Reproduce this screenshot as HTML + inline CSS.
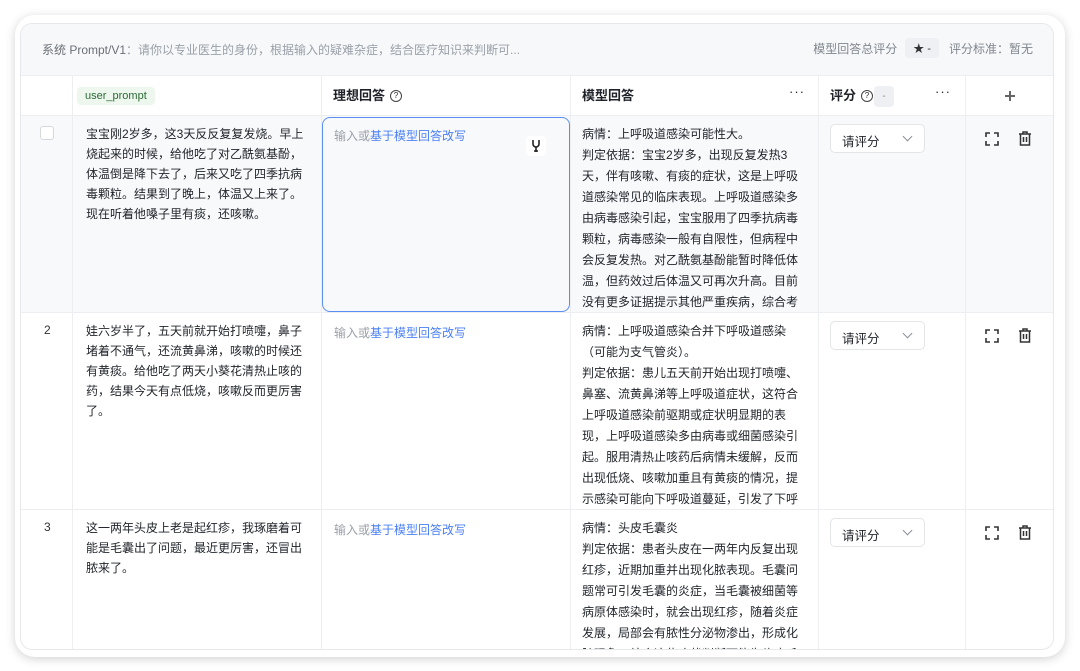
<!DOCTYPE html>
<html><head><meta charset="utf-8"><style>
*{box-sizing:border-box;margin:0;padding:0}
body{width:1080px;height:671px;background:#fff;font-family:"Liberation Sans","Noto Sans CJK SC",sans-serif;position:relative;overflow:hidden;color:#1f2329}
.outer{position:absolute;left:15px;top:15px;width:1050px;height:642px;border-radius:20px;background:#fff;box-shadow:0 2px 10px rgba(0,0,0,.18)}
.panel{position:absolute;left:20px;top:23px;width:1034px;height:627px;border:1px solid #e6e8ec;border-radius:12px;overflow:hidden;background:#fff}
.top{position:absolute;left:0;top:0;width:100%;height:52px;background:#f7f8fa;border-bottom:1px solid #eceef1;font-size:12px;color:#6b7280}
.top .l{position:absolute;left:21px;top:17px}
.top .l b{font-weight:normal;color:#6b7075}
.top .l span{color:#9aa0a8}
.top .r{position:absolute;right:20px;top:14px;display:flex;align-items:center;color:#80868f}
.chip{background:#eef0f3;border-radius:4px;padding:2px 8px;margin:0 10px 0 8px;color:#333;font-size:11px}
.col{position:absolute;top:52px;bottom:0;border-left:1px solid #eceef1}
.hdr{position:absolute;top:52px;left:0;width:100%;height:40px;border-bottom:1px solid #eceef1;background:#fff}
.h{position:absolute;top:64px;font-size:13px;line-height:16px;font-weight:bold;color:#1f2329}
.q{font-weight:normal;display:inline-block;width:12px;height:12px;border:1px solid #444;border-radius:50%;font-size:8px;line-height:10px;text-align:center;vertical-align:top;margin-top:2px;margin-left:5px}
.row{position:absolute;left:0;width:100%;border-bottom:1px solid #eceef1}
.t{position:absolute;font-size:12px;line-height:20px;color:#1f2329}
.m{line-height:21px}
.ph{position:absolute;font-size:12px;color:#9aa0a8}
.ph span{color:#4a7ff7}
.sel{position:absolute;width:95px;height:29px;border:1px solid #e3e5e9;border-radius:5px;background:#fff;font-size:12.5px;padding:6px 0 0 11px}
.sel i{position:absolute;right:13px;top:8px;width:7px;height:7px;border-right:1.2px solid #8a9099;border-bottom:1.2px solid #8a9099;transform:rotate(45deg)}
.clip{overflow:hidden}
.num{position:absolute;left:23px;font-size:12px;color:#333}
svg{position:absolute}
</style></head><body>
<div class="outer"></div>
<div class="panel">
 <div class="top"><div class="l"><b>系统 Prompt/V1</b><span>：请你以专业医生的身份，根据输入的疑难杂症，结合医疗知识来判断可...</span></div>
 <div class="r">模型回答总评分<span class="chip">★ -</span>评分标准：暂无</div></div>
 <div class="hdr"></div>
 <div class="row" style="top:92px;height:197px;background:#f8f9fb"></div>
 <div class="row" style="top:289px;height:197px"></div>
 <div class="col" style="left:51px"></div>
 <div class="col" style="left:300px"></div>
 <div class="col" style="left:549px"></div>
 <div class="col" style="left:797px"></div>
 <div class="col" style="left:944px"></div>
 <div style="position:absolute;left:56px;top:63px;background:#edf7ee;color:#2c6a35;font-size:11px;padding:3px 8px;border-radius:4px">user_prompt</div>
 <div class="h" style="left:312px">理想回答<span class="q">?</span></div>
 <div class="h" style="left:561px">模型回答</div>
 <div style="position:absolute;left:768px;top:60px;font-size:13px;letter-spacing:1px">···</div>
 <div class="h" style="left:809px">评分<span class="q">?</span></div>
 <div style="position:absolute;left:853px;top:62px;width:20px;height:21px;background:#eef0f3;border-radius:4px;font-size:10px;color:#888;text-align:center;line-height:21px">-</div>
 <div style="position:absolute;left:914px;top:60px;font-size:13px;letter-spacing:1px">···</div>
 <svg style="left:983px;top:66px" width="12" height="12"><path d="M6 1v10M1 6h10" stroke="#666" stroke-width="2"/></svg>

 <!-- row 1 -->
 <div style="position:absolute;left:19px;top:102px;width:14px;height:14px;border:1px solid #d5d8dd;border-radius:3px;background:#fff"></div>
 <div class="t" style="left:65px;top:100px;width:224px">宝宝刚2岁多，这3天反反复复发烧。早上烧起来的时候，给他吃了对乙酰氨基酚，体温倒是降下去了，后来又吃了四季抗病毒颗粒。结果到了晚上，体温又上来了。现在听着他嗓子里有痰，还咳嗽。</div>
 <div style="position:absolute;left:301px;top:93px;width:248px;height:195px;border:1px solid #5b8ef5;border-radius:8px;background:#f8f9fb"></div>
 <div class="ph" style="left:313px;top:103px">输入或<span>基于模型回答改写</span></div>
 <div style="position:absolute;left:505px;top:112px;width:20px;height:20px;background:#fff;border-radius:4px"></div>
 <svg style="left:509px;top:115px" width="12" height="14"><path d="M3 1v4a3 3 0 0 0 6 0V1M6 8v5M4 12h4" stroke="#222" stroke-width="1.6" fill="none"/></svg>
 <div class="t m clip" style="left:561px;top:100px;width:226px;height:188px">病情：上呼吸道感染可能性大。<br>判定依据：宝宝2岁多，出现反复发热3天，伴有咳嗽、有痰的症状，这是上呼吸道感染常见的临床表现。上呼吸道感染多由病毒感染引起，宝宝服用了四季抗病毒颗粒，病毒感染一般有自限性，但病程中会反复发热。对乙酰氨基酚能暂时降低体温，但药效过后体温又可再次升高。目前没有更多证据提示其他严重疾病，综合考虑上呼吸道感染可能性大。</div>
 <div class="sel" style="left:809px;top:100px">请评分<i></i></div>
 <svg style="left:964px;top:108px" width="14" height="14"><path d="M1 5V1h4M9 1h4v4M13 9v4H9M5 13H1V9" stroke="#333" stroke-width="1.6" fill="none"/></svg>
 <svg style="left:997px;top:107px" width="14" height="15"><path d="M1 3h12M5 3V1h4v2M2.5 3v11h9V3M5.5 6v5M8.5 6v5" stroke="#333" stroke-width="1.5" fill="none"/></svg>

 <!-- row 2 -->
 <div class="num" style="top:299px">2</div>
 <div class="t" style="left:65px;top:297px;width:224px">娃六岁半了，五天前就开始打喷嚏，鼻子堵着不通气，还流黄鼻涕，咳嗽的时候还有黄痰。给他吃了两天小葵花清热止咳的药，结果今天有点低烧，咳嗽反而更厉害了。</div>
 <div class="ph" style="left:313px;top:300px">输入或<span>基于模型回答改写</span></div>
 <div class="t m clip" style="left:561px;top:297px;width:226px;height:188px">病情：上呼吸道感染合并下呼吸道感染（可能为支气管炎）。<br>判定依据：患儿五天前开始出现打喷嚏、鼻塞、流黄鼻涕等上呼吸道症状，这符合上呼吸道感染前驱期或症状明显期的表现，上呼吸道感染多由病毒或细菌感染引起。服用清热止咳药后病情未缓解，反而出现低烧、咳嗽加重且有黄痰的情况，提示感染可能向下呼吸道蔓延，引发了下呼吸道感染，在儿童中支气管炎较为常见。</div>
 <div class="sel" style="left:809px;top:297px">请评分<i></i></div>
 <svg style="left:964px;top:305px" width="14" height="14"><path d="M1 5V1h4M9 1h4v4M13 9v4H9M5 13H1V9" stroke="#333" stroke-width="1.6" fill="none"/></svg>
 <svg style="left:997px;top:304px" width="14" height="15"><path d="M1 3h12M5 3V1h4v2M2.5 3v11h9V3M5.5 6v5M8.5 6v5" stroke="#333" stroke-width="1.5" fill="none"/></svg>

 <!-- row 3 -->
 <div class="num" style="top:496px">3</div>
 <div class="t" style="left:65px;top:494px;width:224px">这一两年头皮上老是起红疹，我琢磨着可能是毛囊出了问题，最近更厉害，还冒出脓来了。</div>
 <div class="ph" style="left:313px;top:497px">输入或<span>基于模型回答改写</span></div>
 <div class="t m clip" style="left:561px;top:494px;width:226px;height:132px">病情：头皮毛囊炎<br>判定依据：患者头皮在一两年内反复出现红疹，近期加重并出现化脓表现。毛囊问题常可引发毛囊的炎症，当毛囊被细菌等病原体感染时，就会出现红疹，随着炎症发展，局部会有脓性分泌物渗出，形成化脓现象。综合这些症状判断可能为头皮毛囊炎。</div>
 <div class="sel" style="left:809px;top:494px">请评分<i></i></div>
 <svg style="left:964px;top:502px" width="14" height="14"><path d="M1 5V1h4M9 1h4v4M13 9v4H9M5 13H1V9" stroke="#333" stroke-width="1.6" fill="none"/></svg>
 <svg style="left:997px;top:501px" width="14" height="15"><path d="M1 3h12M5 3V1h4v2M2.5 3v11h9V3M5.5 6v5M8.5 6v5" stroke="#333" stroke-width="1.5" fill="none"/></svg>
</div>
</body></html>
